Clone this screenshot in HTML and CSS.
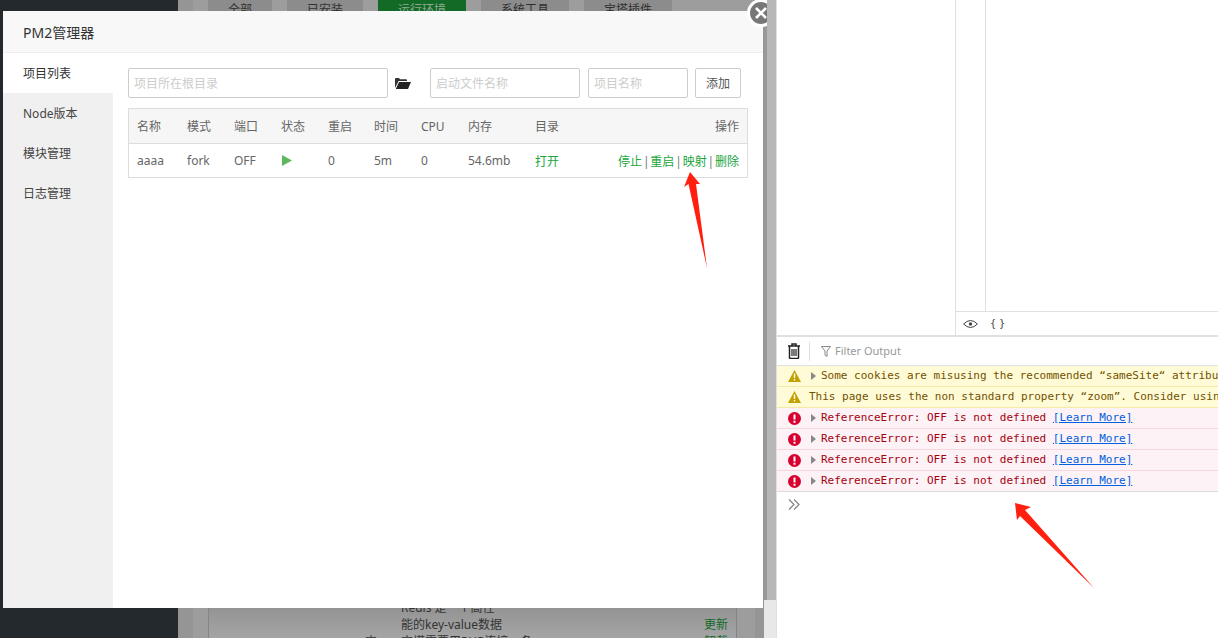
FILE: index.html
```html
<!DOCTYPE html>
<html lang="en">
<head>
    <meta charset="UTF-8">
    <title>PM2管理器</title>
    <link rel="stylesheet" href="styles.css">
</head>
<body>
    <div class="app">
        <div class="app-side"></div>
        <div class="app-main">
            <div class="main-card">
                <div class="tabs">
                    <span class="tab">全部</span>
                    <span class="tab">已安装</span>
                    <span class="tab tab-on">运行环境</span>
                    <span class="tab">系统工具</span>
                    <span class="tab">宝塔插件</span>
                </div>
                <div class="soft-list">
                    <div class="soft-row"><span class="soft-name"></span><span class="soft-desc">Redis 是一个高性</span><span class="soft-op"></span></div>
                    <div class="soft-row"><span class="soft-name"></span><span class="soft-desc">能的key-value数据</span><span class="soft-op">更新</span></div>
                    <div class="soft-row"><span class="soft-name">宝</span><span class="soft-desc">宝塔需要用PHP连接一条</span><span class="soft-op">卸载</span></div>
                </div>
            </div>
        </div>
        <div class="app-scroll"><div class="app-thumb"></div></div>

        <div class="modal">
            <div class="modal-title">PM2管理器</div>
            <a class="modal-close">
                <svg width="14" height="14" viewBox="0 0 14 14"><path d="M2 2l10 10M12 2L2 12" stroke="#fff" stroke-width="2.6" fill="none"/></svg>
            </a>
            <div class="modal-body">
                <ul class="menu">
                    <li class="menu-on">项目列表</li>
                    <li>Node版本</li>
                    <li>模块管理</li>
                    <li>日志管理</li>
                </ul>
                <div class="content">
                    <div class="add-form">
                        <input class="bt-input w-path" type="text" placeholder="项目所在根目录">
                        <svg class="folder" width="16" height="12" viewBox="0 0 16 12">
                            <path d="M0 11V2q0-1 1-1h3l1 1.2h6q1 0 1 1V4H3.6L0 11z" fill="#333"/>
                            <path d="M4 5h12l-3 7H.8z" fill="#222"/>
                        </svg>
                        <input class="bt-input w-file" type="text" placeholder="启动文件名称">
                        <input class="bt-input w-name" type="text" placeholder="项目名称">
                        <button class="bt-btn">添加</button>
                    </div>
                    <table class="pm-table">
                        <thead>
                            <tr>
                                <th class="c1">名称</th>
                                <th class="c2">模式</th>
                                <th class="c3">端口</th>
                                <th class="c4">状态</th>
                                <th class="c5">重启</th>
                                <th class="c6">时间</th>
                                <th class="c7">CPU</th>
                                <th class="c8">内存</th>
                                <th class="c9">目录</th>
                                <th class="c10">操作</th>
                            </tr>
                        </thead>
                        <tbody>
                            <tr>
                                <td>aaaa</td>
                                <td>fork</td>
                                <td>OFF</td>
                                <td><svg class="play" width="10" height="11" viewBox="0 0 10 11"><path d="M0 0l10 5.5L0 11z" fill="#5cb85c"/></svg></td>
                                <td>0</td>
                                <td>5m</td>
                                <td>0</td>
                                <td>54.6mb</td>
                                <td><a class="link">打开</a></td>
                                <td class="c10"><a class="link">停止</a><span class="sep">|</span><a class="link">重启</a><span class="sep">|</span><a class="link">映射</a><span class="sep">|</span><a class="link">删除</a></td>
                            </tr>
                        </tbody>
                    </table>
                </div>
            </div>
        </div>
    </div>

    <div class="devtools">
        <div class="dt-top">
            <div class="dt-left"></div>
            <div class="dt-source">
                <div class="dt-code"><div class="dt-gutter"></div></div>
                <div class="dt-foot">
                    <svg width="15" height="10" viewBox="0 0 15 10"><path d="M.6 5Q7.5-2 14.400 5 7.500 12 .6 5z" fill="none" stroke="#444"/><circle cx="7.500" cy="5" r="1.700" fill="#444"/></svg>
                    <span class="dt-braces">{ }</span>
                </div>
            </div>
        </div>
        <div class="console">
            <div class="con-bar">
                <svg class="con-trash" width="14" height="16" viewBox="0 0 14 16">
                    <path d="M1 3h12M5 3V1h4v2M2.500 3v11.500q0 1 1 1h7q1 0 1-1V3" fill="none" stroke="#222" stroke-width="1.500"/>
                    <path d="M5 6v7M7 6v7M9 6v7" stroke="#222" stroke-width="1.200"/>
                </svg>
                <span class="con-sep"></span>
                <svg class="con-filter" width="10" height="11" viewBox="0 0 10 11"><path d="M.5.5h9L6 5v5.500L4 9V5z" fill="none" stroke="#888"/></svg>
                <span class="con-filter-text">Filter Output</span>
            </div>
            <div class="msg msg-warn">
                <svg class="msg-icon" width="13" height="12" viewBox="0 0 13 12"><path d="M6.500 0L13 12H0z" fill="#c2a000"/><path d="M5.800 3.500h1.400v4.500H5.800zM5.800 9h1.400v1.500H5.800z" fill="#fff"/></svg>
                <span class="msg-arrow"></span>
                <span class="msg-text">Some cookies are misusing the recommended “sameSite“ attribute</span>
            </div>
            <div class="msg msg-warn">
                <svg class="msg-icon" width="13" height="12" viewBox="0 0 13 12"><path d="M6.500 0L13 12H0z" fill="#c2a000"/><path d="M5.800 3.500h1.400v4.500H5.800zM5.800 9h1.400v1.500H5.800z" fill="#fff"/></svg>
                <span class="msg-text">This page uses the non standard property “zoom”. Consider using</span>
            </div>
            <div class="msg msg-err">
                <svg class="msg-icon" width="13" height="13" viewBox="0 0 13 13"><circle cx="6.500" cy="6.500" r="6.500" fill="#d7002e"/><path d="M5.500 2.500h2v5h-2zM5.500 8.800h2v2h-2z" fill="#fff"/></svg>
                <span class="msg-arrow"></span>
                <span class="msg-text">ReferenceError: OFF is not defined <a class="msg-link">[Learn More]</a></span>
            </div>
            <div class="msg msg-err">
                <svg class="msg-icon" width="13" height="13" viewBox="0 0 13 13"><circle cx="6.500" cy="6.500" r="6.500" fill="#d7002e"/><path d="M5.500 2.500h2v5h-2zM5.500 8.800h2v2h-2z" fill="#fff"/></svg>
                <span class="msg-arrow"></span>
                <span class="msg-text">ReferenceError: OFF is not defined <a class="msg-link">[Learn More]</a></span>
            </div>
            <div class="msg msg-err">
                <svg class="msg-icon" width="13" height="13" viewBox="0 0 13 13"><circle cx="6.500" cy="6.500" r="6.500" fill="#d7002e"/><path d="M5.500 2.500h2v5h-2zM5.500 8.800h2v2h-2z" fill="#fff"/></svg>
                <span class="msg-arrow"></span>
                <span class="msg-text">ReferenceError: OFF is not defined <a class="msg-link">[Learn More]</a></span>
            </div>
            <div class="msg msg-err msg-last">
                <svg class="msg-icon" width="13" height="13" viewBox="0 0 13 13"><circle cx="6.500" cy="6.500" r="6.500" fill="#d7002e"/><path d="M5.500 2.500h2v5h-2zM5.500 8.800h2v2h-2z" fill="#fff"/></svg>
                <span class="msg-arrow"></span>
                <span class="msg-text">ReferenceError: OFF is not defined <a class="msg-link">[Learn More]</a></span>
            </div>
            <div class="con-prompt">
                <svg width="12" height="11" viewBox="0 0 12 11"><path d="M1 .5l5 5-5 5M6 .5l5 5-5 5" fill="none" stroke="#888" stroke-width="1.300"/></svg>
            </div>
        </div>
    </div>

    <!-- red arrows drawn on top of the shot -->
    <svg class="arrow arrow-one" width="30" height="100" viewBox="680 170 30 100"><path d="M690 172L700 184 696 184 707 268 688.500 184 684 187z" fill="#ff2010"/></svg>
    <svg class="arrow arrow-two" width="84" height="90" viewBox="1012 500 84 90"><path d="M1015 503L1031 507 1025 510 1094 588 1020 516 1017 520z" fill="#ff2010"/></svg>
</body>
</html>
```

FILE: styles.css
```css
* {
    box-sizing: border-box;
}

body {
    margin: 0;
    height: 638px;
    display: flex;
    overflow: hidden;
    background-color: #fff;
    font-family: "Noto Sans", "Noto Sans CJK SC", sans-serif;
    font-size: 12px;
    color: #666;
}

/* dimmed page behind the dialog */
.app {
    position: relative;
    width: 776px;
    display: flex;
    flex-shrink: 0;
}

.app-side {
    width: 178px;
    background-color: #24292e;
}

.app-main {
    width: 586px;
    padding: 0 9px 0 15px;
    overflow: hidden;
    background-color: #959595;
}

.main-card {
    height: 100%;
    padding: 0 18px 0 15px;
    display: flex;
    flex-direction: column;
    justify-content: space-between;
    background-color: #9d9d9d;
}

.tabs {
    display: flex;
    gap: 15px;
    margin-top: -5px;
}

.tab {
    height: 30px;
    padding: 0 20px;
    line-height: 30px;
    background-color: #8c8c8c;
    color: #2f2f2f;
}

.tab-on {
    background-color: #136a27;
    color: #8fa894;
}

.soft-list {
    margin-bottom: -12px;
    padding: 0 8px 0 0;
    border-left: 1px solid #858585;
    border-right: 1px solid #858585;
    background: linear-gradient(#8e8e8e, #acacac);
    color: #333;
}

.soft-row {
    height: 17px;
    line-height: 17px;
    display: flex;
}

.soft-name {
    width: 192px;
    text-align: right;
    padding-right: 24px;
    flex-shrink: 0;
}

.soft-desc {
    flex: 1;
}

.soft-op {
    color: #126a2a;
}

.app-scroll {
    width: 12px;
    background: #e8e8e8 linear-gradient(#999, #999) 0 0 / 3px 600px no-repeat;
}

.app-thumb {
    position: relative;
    z-index: 3;
    width: 9px;
    height: 600px;
    margin-left: 3px;
    background-color: #b7b7b7;
}

/* dialog */
.modal {
    position: absolute;
    z-index: 2;
    left: 3px;
    top: 11px;
    width: 760px;
    height: 597px;
    display: flex;
    flex-direction: column;
    background-color: #fff;
}

.modal-title {
    height: 42px;
    padding-left: 20px;
    line-height: 44px;
    font-size: 14px;
    color: #333;
    background-color: #f8f8f8;
    border-bottom: 1px solid #eee;
}

.modal-close {
    position: absolute;
    left: 744px;
    top: -12px;
    width: 28px;
    height: 28px;
    display: flex;
    align-items: center;
    justify-content: center;
    border: 3px solid #fff;
    border-radius: 50%;
    background-color: #777;
}

.modal-body {
    flex: 1;
    display: flex;
}

.menu {
    width: 110px;
    margin: 0;
    padding: 0;
    list-style: none;
    background-color: #f0f0f0;
}

.menu li {
    height: 40px;
    padding-left: 20px;
    line-height: 42px;
    color: #444;
}

.menu .menu-on {
    background-color: #fff;
    color: #333;
}

.content {
    flex: 1;
    padding: 15px 15px 0;
}

.add-form {
    display: flex;
    align-items: center;
    height: 30px;
    margin-bottom: 10px;
}

.bt-input {
    height: 30px;
    padding: 0 5px;
    border: 1px solid #ccc;
    border-radius: 2px;
    outline: none;
    font: inherit;
}

.bt-input::placeholder {
    color: #ccc;
}

.w-path {
    width: 260px;
}

.folder {
    margin: 0 19px 0 7px;
}

.w-file {
    width: 150px;
    margin-right: 8px;
}

.w-name {
    width: 100px;
    margin-right: 7px;
}

.bt-btn {
    width: 46px;
    height: 30px;
    padding: 0;
    border: 1px solid #ccc;
    border-radius: 2px;
    background-color: #fff;
    font: inherit;
    color: #555;
}

.pm-table {
    width: 620px;
    table-layout: fixed;
    border-collapse: collapse;
    border: 1px solid #ddd;
}

.pm-table th,
.pm-table td {
    padding: 0 8px;
    font-weight: normal;
    text-align: left;
}

.pm-table th {
    height: 35px;
    background-color: #f6f6f6;
    border-bottom: 1px solid #ddd;
}

.pm-table td {
    height: 34px;
}

.c1 { width: 50.5px; }
.c2 { width: 47px; }
.c3 { width: 47px; }
.c4 { width: 47px; }
.c5 { width: 46px; }
.c6 { width: 47px; }
.c7 { width: 47px; }
.c8 { width: 67px; }
.c9 { width: 60px; }

.pm-table .c10 {
    text-align: right;
    white-space: nowrap;
}

.link {
    color: #20a53a;
}

.sep {
    display: inline-block;
    width: 8.3px;
    text-align: center;
    color: #777;
}

.play {
    display: block;
    margin-left: 1px;
}

/* browser dev tools */
.devtools {
    flex: 1;
    min-width: 0;
    display: flex;
    flex-direction: column;
    border-left: 1px solid #e0e0e0;
}

.dt-top {
    height: 335px;
    display: flex;
}

.dt-left {
    width: 178px;
}

.dt-source {
    flex: 1;
    display: flex;
    flex-direction: column;
    border-left: 1px solid #e0e0e0;
}

.dt-code {
    flex: 1;
}

.dt-gutter {
    width: 30px;
    height: 100%;
    border-right: 1px solid #e0e0e0;
}

.dt-foot {
    height: 24px;
    display: flex;
    align-items: center;
    gap: 13px;
    padding-left: 7px;
    border-top: 1px solid #e0e0e0;
}

.dt-braces {
    margin-bottom: 2px;
    font-size: 11px;
    word-spacing: 2px;
    color: #444;
}

.console {
    flex: 1;
    border-top: 2px solid #e0e0e0;
}

.con-bar {
    height: 29px;
    display: flex;
    align-items: center;
    padding-left: 10px;
    border-bottom: 1px solid #e0e0e0;
}

.con-sep {
    width: 1px;
    height: 19px;
    margin: 0 11px 0 8px;
    background-color: #e0e0e0;
}

.con-filter-text {
    margin-left: 4px;
    margin-bottom: 2px;
    font-size: 11px;
    color: #999;
}

.msg {
    height: 21px;
    display: flex;
    align-items: center;
    padding-left: 11px;
    overflow: hidden;
    white-space: nowrap;
    font-family: "DejaVu Sans Mono", monospace;
    font-size: 11px;
}

.msg-warn {
    background-color: #fffbd6;
    border-bottom: 1px solid #f5e9a8;
    color: #715100;
}

.msg-err {
    background-color: #fdf2f5;
    border-bottom: 1px solid #f6d5dd;
    color: #a4000f;
}

.msg-last {
    border-bottom-color: #ddd;
}

.msg-icon {
    flex-shrink: 0;
    margin-right: 8px;
}

.msg-text {
    margin-bottom: 2px;
}

.msg-arrow {
    flex-shrink: 0;
    width: 0;
    height: 0;
    margin-right: 5px;
    margin-left: 2px;
    border-left: 5px solid #888;
    border-top: 4px solid transparent;
    border-bottom: 4px solid transparent;
}

.msg-link {
    color: #0060df;
    text-decoration: underline;
}

.con-prompt {
    padding: 7px 0 0 11px;
}

.con-prompt svg {
    display: block;
}

/* annotations */
.arrow {
    position: absolute;
    z-index: 5;
    pointer-events: none;
}

.arrow-one {
    left: 680px;
    top: 170px;
}

.arrow-two {
    left: 1012px;
    top: 500px;
}
```
